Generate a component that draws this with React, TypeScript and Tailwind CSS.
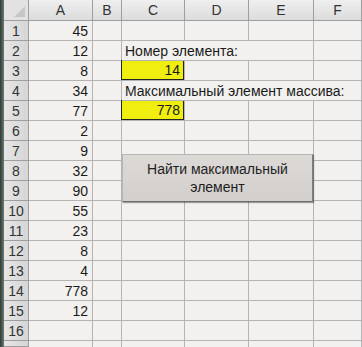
const cols = ["A", "B", "C", "D", "E", "F"];
const colA = [45, 12, 8, 34, 77, 2, 9, 32, 90, 55, 23, 8, 4, 778, 12, ""];

// cells whose right border is hidden because text spills over
const spill: Record<string, boolean> = {
  "2-C": true,
  "2-D": true,
  "4-C": true,
  "4-D": true,
  "4-E": true,
};

function Cell({ row, col }: { row: number; col: string }) {
  const noRight = spill[`${row}-${col}`];
  const base =
    "relative border-b border-[#b4b4b4] bg-[#f2f1ef] text-[14px] leading-none text-[#1a1a1a] flex items-center " +
    (noRight ? "" : "border-r");

  if (col === "A") {
    return <div className={base + " justify-end pr-[4px]"}>{colA[row - 1]}</div>;
  }
  if (col === "C" && row === 2) {
    return (
      <div className={base + " pl-[3px] whitespace-nowrap overflow-visible z-10"}>
        Номер элемента:
      </div>
    );
  }
  if (col === "C" && row === 4) {
    return (
      <div className={base + " pl-[3px] whitespace-nowrap overflow-visible z-10"}>
        Максимальный элемент массива:
      </div>
    );
  }
  if (col === "C" && (row === 3 || row === 5)) {
    return (
      <div className={base + " p-0"}>
        <div className="flex h-[calc(100%+1px)] w-[calc(100%+1px)] -ml-[1px] -mt-[1px] items-center justify-end border border-[#222] bg-[#f0ee10] pr-[3px]">
          {row === 3 ? 14 : 778}
        </div>
      </div>
    );
  }
  return <div className={base} />;
}

export default function App() {
  return (
    <div
      className="relative flex h-[347px] w-[362px] overflow-hidden bg-[#f2f1ef]"
      style={{ fontFamily: '"Liberation Sans", Arial, sans-serif' }}
    >
      <div className="w-[4px] shrink-0 bg-gradient-to-r from-[#2f3d35] to-[#6c7a72]" />
      <div className="grid flex-1 grid-cols-[25px_64px_29px_63px_64px_65px_1fr] grid-rows-[21px_repeat(16,20px)_1fr]">
        {/* corner */}
        <div className="relative border-b border-r border-[#9e9e9e] bg-[#e2e2e2]">
          <div className="absolute bottom-[3px] right-[3px] h-0 w-0 border-b-[11px] border-l-[11px] border-b-[#c6c6c6] border-l-transparent" />
        </div>
        {cols.map((c) => (
          <div
            key={c}
            className="flex items-center justify-center border-b border-r border-[#9e9e9e] bg-gradient-to-b from-[#efefef] to-[#dcdcdc] text-[14px] leading-none text-[#333]"
          >
            {c}
          </div>
        ))}
        {Array.from({ length: 17 }, (_, i) => i + 1).map((row) => (
          <div key={row} className="contents">
            <div className="flex items-center justify-center border-b border-r border-[#9e9e9e] bg-gradient-to-r from-[#e6e6e6] to-[#d6d6d6] text-[14px] leading-none text-[#333]">
              {row <= 16 ? row : ""}
            </div>
            {row <= 16 ? (
              cols.map((c) => <Cell key={c} row={row} col={c} />)
            ) : (
              cols.map((c) => (
                <div key={c} className="border-r border-[#b4b4b4] bg-[#f2f1ef]" />
              ))
            )}
          </div>
        ))}
      </div>

      {/* form button floating over the sheet */}
      <button className="absolute left-[122px] top-[154px] flex h-[48px] w-[191px] flex-col items-center justify-center border border-[#b8b6b3] border-b-[#6e6c6a] border-r-[#7e7c7a] bg-gradient-to-b from-[#dcd9d6] to-[#d2cfcc] text-[14px] leading-[18px] text-[#1e1e1e] shadow-[1px_1px_1px_rgba(0,0,0,0.35)]">
        <span>Найти максимальный</span>
        <span>элемент</span>
      </button>
    </div>
  );
}
